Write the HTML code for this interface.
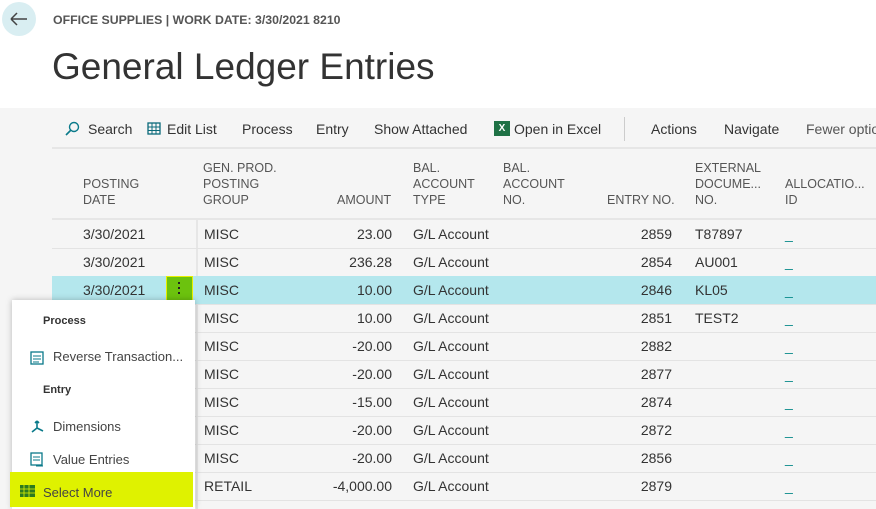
<!DOCTYPE html><html><head><style>
body{margin:0;width:876px;height:509px;overflow:hidden;background:#f5f5f5;font-family:"Liberation Sans",sans-serif;position:relative;color:#333}
.a{position:absolute;white-space:nowrap}
.top{position:absolute;left:0;top:0;width:876px;height:108px;background:#fff}
.tb{font-size:14px;color:#333;top:121px}
.h{font-size:12.5px;color:#555;line-height:16px}
.r{position:absolute;left:52px;width:824px;height:28px;border-bottom:1px solid #e3e3e3;font-size:14px}
.r span{position:absolute;top:6px;white-space:nowrap}
.u{color:#0a8a8a}
.m{font-size:13px;color:#444}
</style></head><body>
<div class="top"></div>
<div class="a" style="left:2px;top:2px;width:34px;height:34px;border-radius:50%;background:#d9eef2"></div>
<svg class="a" style="left:9px;top:11px" width="20" height="16"><path d="M2 8H18M2 8L8 2M2 8L8 14" stroke="#444" stroke-width="1.5" fill="none"/></svg>
<div class="a" style="left:53px;top:13px;font-size:12.3px;color:#555;font-weight:bold">OFFICE SUPPLIES | WORK DATE: 3/30/2021 8210</div>
<div class="a" style="left:52px;top:46px;font-size:37px;color:#333">General Ledger Entries</div>
<svg class="a" style="left:64px;top:121px" width="16" height="16"><circle cx="10" cy="6" r="4.5" stroke="#0a7a8a" stroke-width="1.4" fill="none"/><path d="M7 9L2 14" stroke="#0a7a8a" stroke-width="1.6"/></svg>
<div class="a tb" style="left:88px">Search</div>
<svg class="a" style="left:147px;top:121px" width="16" height="15"><rect x="1" y="2" width="12" height="11" fill="none" stroke="#0a6a7a" stroke-width="1.3"/><path d="M1 6H13M1 9.5H13M5 2V13M9 2V13" stroke="#0a6a7a"/></svg>
<div class="a tb" style="left:167px">Edit List</div>
<div class="a tb" style="left:242px">Process</div>
<div class="a tb" style="left:316px">Entry</div>
<div class="a tb" style="left:374px">Show Attached</div>
<div class="a" style="left:494px;top:121px;width:16px;height:15px;background:#1e7145;color:#fff;font-size:10px;font-weight:bold;text-align:center;line-height:15px">X</div>
<div class="a tb" style="left:514px">Open in Excel</div>
<div class="a" style="left:624px;top:117px;width:1px;height:24px;background:#ccc"></div>
<div class="a tb" style="left:651px">Actions</div>
<div class="a tb" style="left:724px">Navigate</div>
<div class="a tb" style="left:806px;color:#555">Fewer options</div>
<div class="a" style="left:52px;top:147px;width:824px;height:2px;background:#e6e6e6"></div>
<div class="a h" style="left:83px;top:176px">POSTING<br>DATE</div>
<div class="a h" style="left:203px;top:160px">GEN. PROD.<br>POSTING<br>GROUP</div>
<div class="a h" style="left:337px;top:192px">AMOUNT</div>
<div class="a h" style="left:413px;top:160px">BAL.<br>ACCOUNT<br>TYPE</div>
<div class="a h" style="left:503px;top:160px">BAL.<br>ACCOUNT<br>NO.</div>
<div class="a h" style="left:607px;top:192px">ENTRY NO.</div>
<div class="a h" style="left:695px;top:160px">EXTERNAL<br>DOCUME...<br>NO.</div>
<div class="a h" style="left:785px;top:176px">ALLOCATIO...<br>ID</div>
<div class="a" style="left:52px;top:218px;width:824px;height:2px;background:#e6e6e6"></div>
<div class="a" style="left:196px;top:220px;width:2px;height:289px;background:#e6e6e6"></div>

<div class="r" style="top:220px"><span style="left:31px">3/30/2021</span><span style="left:152px">MISC</span><span style="right:484px">23.00</span><span style="left:361px">G/L Account</span><span style="right:204px">2859</span><span style="left:643px">T87897</span><span class="u" style="left:733px;top:6px">_</span></div>
<div class="r" style="top:248px"><span style="left:31px">3/30/2021</span><span style="left:152px">MISC</span><span style="right:484px">236.28</span><span style="left:361px">G/L Account</span><span style="right:204px">2854</span><span style="left:643px">AU001</span><span class="u" style="left:733px;top:6px">_</span></div>
<div class="r" style="top:276px;background:#b4e7ed"><span style="left:31px">3/30/2021</span><span style="left:152px">MISC</span><span style="right:484px">10.00</span><span style="left:361px">G/L Account</span><span style="right:204px">2846</span><span style="left:643px">KL05</span><span class="u" style="left:733px;top:6px">_</span></div>
<div class="a" style="left:166px;top:276px;width:27px;height:26px;background:#6cc20e;border:1px solid #e8f000;box-sizing:border-box"></div>
<div class="a" style="left:178px;top:282px;width:2px;height:2px;background:#222;box-shadow:0 5px 0 #222,0 10px 0 #222"></div>
<div class="r" style="top:304px"><span style="left:152px">MISC</span><span style="right:484px">10.00</span><span style="left:361px">G/L Account</span><span style="right:204px">2851</span><span style="left:643px">TEST2</span><span class="u" style="left:733px;top:6px">_</span></div>
<div class="r" style="top:332px"><span style="left:152px">MISC</span><span style="right:484px">-20.00</span><span style="left:361px">G/L Account</span><span style="right:204px">2882</span><span class="u" style="left:733px;top:6px">_</span></div>
<div class="r" style="top:360px"><span style="left:152px">MISC</span><span style="right:484px">-20.00</span><span style="left:361px">G/L Account</span><span style="right:204px">2877</span><span class="u" style="left:733px;top:6px">_</span></div>
<div class="r" style="top:388px"><span style="left:152px">MISC</span><span style="right:484px">-15.00</span><span style="left:361px">G/L Account</span><span style="right:204px">2874</span><span class="u" style="left:733px;top:6px">_</span></div>
<div class="r" style="top:416px"><span style="left:152px">MISC</span><span style="right:484px">-20.00</span><span style="left:361px">G/L Account</span><span style="right:204px">2872</span><span class="u" style="left:733px;top:6px">_</span></div>
<div class="r" style="top:444px"><span style="left:152px">MISC</span><span style="right:484px">-20.00</span><span style="left:361px">G/L Account</span><span style="right:204px">2856</span><span class="u" style="left:733px;top:6px">_</span></div>
<div class="r" style="top:472px"><span style="left:152px">RETAIL</span><span style="right:484px">-4,000.00</span><span style="left:361px">G/L Account</span><span style="right:204px">2879</span><span class="u" style="left:733px;top:6px">_</span></div>

<div class="a" style="left:12px;top:300px;width:183px;height:209px;background:#fff;box-shadow:0 0 6px rgba(0,0,0,.25)"></div>
<div class="a" style="left:43px;top:315px;font-size:11px;font-weight:bold;color:#333">Process</div>
<svg class="a" style="left:28px;top:349px" width="18" height="18"><rect x="3" y="3" width="12" height="12" fill="none" stroke="#0a7a8a" stroke-width="1.3"/><path d="M5 7H13M5 10H13M5 13H11" stroke="#0a7a8a"/></svg>
<div class="a m" style="left:53px;top:349px">Reverse Transaction...</div>
<div class="a" style="left:43px;top:384px;font-size:11px;font-weight:bold;color:#333">Entry</div>
<svg class="a" style="left:28px;top:418px" width="18" height="18"><path d="M9 3V10L4 14M9 10L15 13M9 3L7 5M9 3L11 5" stroke="#0a7a8a" stroke-width="1.6" fill="none"/></svg>
<div class="a m" style="left:53px;top:419px">Dimensions</div>
<svg class="a" style="left:28px;top:451px" width="18" height="18"><rect x="3" y="2" width="11" height="12" fill="none" stroke="#0a7a8a" stroke-width="1.3"/><path d="M5 6H12M5 9H12M8 15H15" stroke="#0a7a8a"/></svg>
<div class="a m" style="left:53px;top:452px">Value Entries</div>
<div class="a" style="left:10px;top:472px;width:183px;height:35px;background:#dff200"></div>
<svg class="a" style="left:19px;top:484px" width="18" height="14"><rect x="1" y="1" width="15" height="12" fill="#2d7a1e"/><path d="M1 5H16M1 9H16M5 1V13M10 1V13" stroke="#dff200" stroke-width=".8"/></svg>
<div class="a m" style="left:43px;top:485px">Select More</div>
</body></html>
